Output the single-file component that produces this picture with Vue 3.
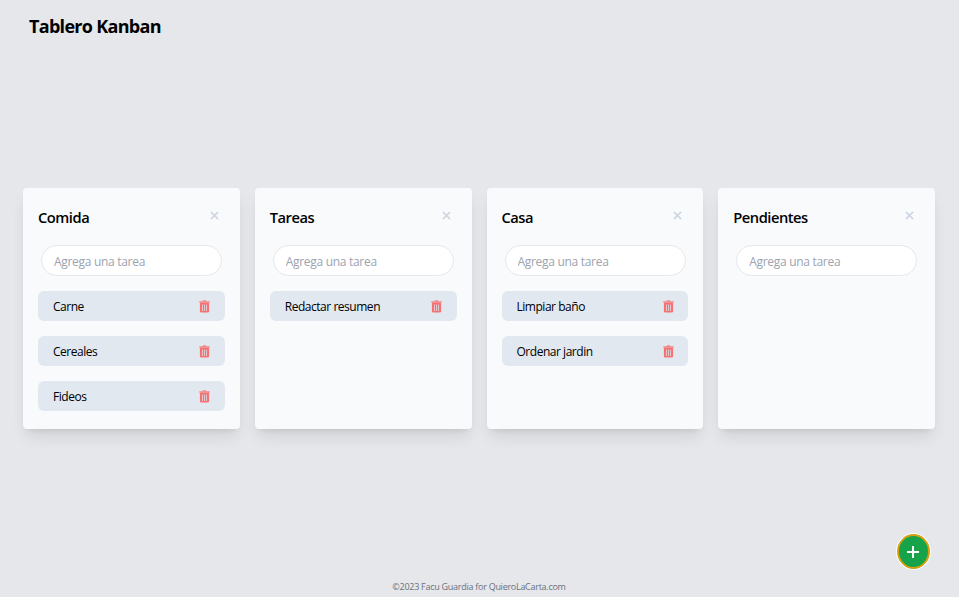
<script setup>
const columns = [
  { title: 'Comida', tasks: ['Carne', 'Cereales', 'Fideos'] },
  { title: 'Tareas', tasks: ['Redactar resumen'] },
  { title: 'Casa', tasks: ['Limpiar baño', 'Ordenar jardin'] },
  { title: 'Pendientes', tasks: [] }
]
</script>

<template>
  <div class="page">
    <h1 class="heading">Tablero Kanban</h1>
    <main class="board">
      <section v-for="col in columns" :key="col.title" class="column">
        <header class="column-head">
          <h2 class="column-title">{{ col.title }}</h2>
          <button class="close" aria-label="Cerrar">
            <svg viewBox="0 0 9 9" width="9" height="9"><path d="M1 1l7 7M8 1l-7 7" /></svg>
          </button>
        </header>
        <input class="field" type="text" placeholder="Agrega una tarea" />
        <ul class="tasks">
          <li v-for="task in col.tasks" :key="task" class="task">
            <span>{{ task }}</span>
            <svg class="trash" viewBox="0 0 11 13" width="11" height="13">
              <path class="lid" d="M.3 1.2h3.2L4 .3h3l.5.9h3.2v1.6H.3z" />
              <path fill-rule="evenodd" d="M.9 2.7h9.2v8.5a1.4 1.4 0 0 1-1.4 1.4H2.3a1.4 1.4 0 0 1-1.4-1.4zM3 4.4v6.5h.7V4.4zm2.15 0v6.5h.7V4.4zm2.15 0v6.5H8V4.4z" />
            </svg>
          </li>
        </ul>
      </section>
    </main>
    <button class="add" aria-label="Agregar">
      <svg viewBox="0 0 12 12" width="12" height="12"><path d="M6 0v12M0 6h12" /></svg>
    </button>
    <footer class="footer">©2023 Facu Guardia for QuieroLaCarta.com</footer>
  </div>
</template>

<style>
body {
  background: #e5e7eb;
  overflow: hidden;
}
</style>

<style scoped>
.page {
  position: relative;
  box-sizing: border-box;
  display: flex;
  flex-direction: column;
  height: 597px;
  padding: 0 24px 0 23px;
  background: #e5e7eb;
  font-family: "Segoe UI", "Open Sans", "Noto Sans", sans-serif;
  font-size: 12px;
  line-height: 16px;
  color: #000;
}
.heading {
  margin: 13px 0 0 6px;
  font-size: 18px;
  line-height: 26px;
  font-weight: 700;
  letter-spacing: -0.7px;
}
.board {
  display: grid;
  grid-template-columns: repeat(4, 1fr);
  gap: 15px;
  height: 240.6px;
  margin-top: 149.4px;
}
.column {
  box-sizing: border-box;
  padding: 15px;
  border-radius: 4px;
  background: #f8fafc;
  box-shadow: 0 10px 15px -3px rgba(0, 0, 0, 0.1), 0 4px 6px -4px rgba(0, 0, 0, 0.1);
}
.column-head {
  display: flex;
  justify-content: space-between;
  height: 42px;
}
.column-title {
  margin: 3px 0 0;
  font-size: 14.7px;
  line-height: 22px;
  font-weight: 600;
  letter-spacing: -0.48px;
}
.close {
  display: flex;
  height: 9px;
  margin: 7.6px 6px 0 0;
  padding: 0;
  border: 0;
  background: none;
}
.close path {
  stroke: #cbd5e1;
  stroke-width: 1.7;
}
.field {
  display: block;
  box-sizing: border-box;
  width: 181px;
  height: 31px;
  margin: 0 0 0 3px;
  padding: 2px 12px 0;
  border: 1px solid #e5e7eb;
  border-radius: 16px;
  background: #fff;
  font: inherit;
  letter-spacing: -0.3px;
}
.field::placeholder {
  color: #9ca3af;
  opacity: 1;
}
.tasks {
  display: grid;
  gap: 15px;
  margin: 15px 0 0;
  padding: 0;
  list-style: none;
}
.task {
  box-sizing: border-box;
  display: flex;
  align-items: center;
  justify-content: space-between;
  height: 30px;
  padding: 1px 14.5px 0 15px;
  border-radius: 6px;
  background: #e2e8f0;
  letter-spacing: -0.47px;
}
.trash {
  fill: #f87171;
}
.lid {
  opacity: 0.8;
}
.add {
  position: absolute;
  left: 896px;
  top: 533px;
  box-sizing: border-box;
  display: flex;
  align-items: center;
  justify-content: center;
  width: 35px;
  height: 37px;
  padding: 0 1px 0 0;
  border: 1px solid #fff;
  border-radius: 50%;
  background: #16a34a;
  background-clip: padding-box;
  box-shadow: inset 0 0 0 2px #dba00c;
}
.add path {
  stroke: #fff;
  stroke-width: 2;
}
.footer {
  margin-top: auto;
  padding-bottom: 4px;
  text-align: center;
  font-size: 9px;
  line-height: 13px;
  letter-spacing: -0.27px;
  color: #6b7280;
}
</style>
